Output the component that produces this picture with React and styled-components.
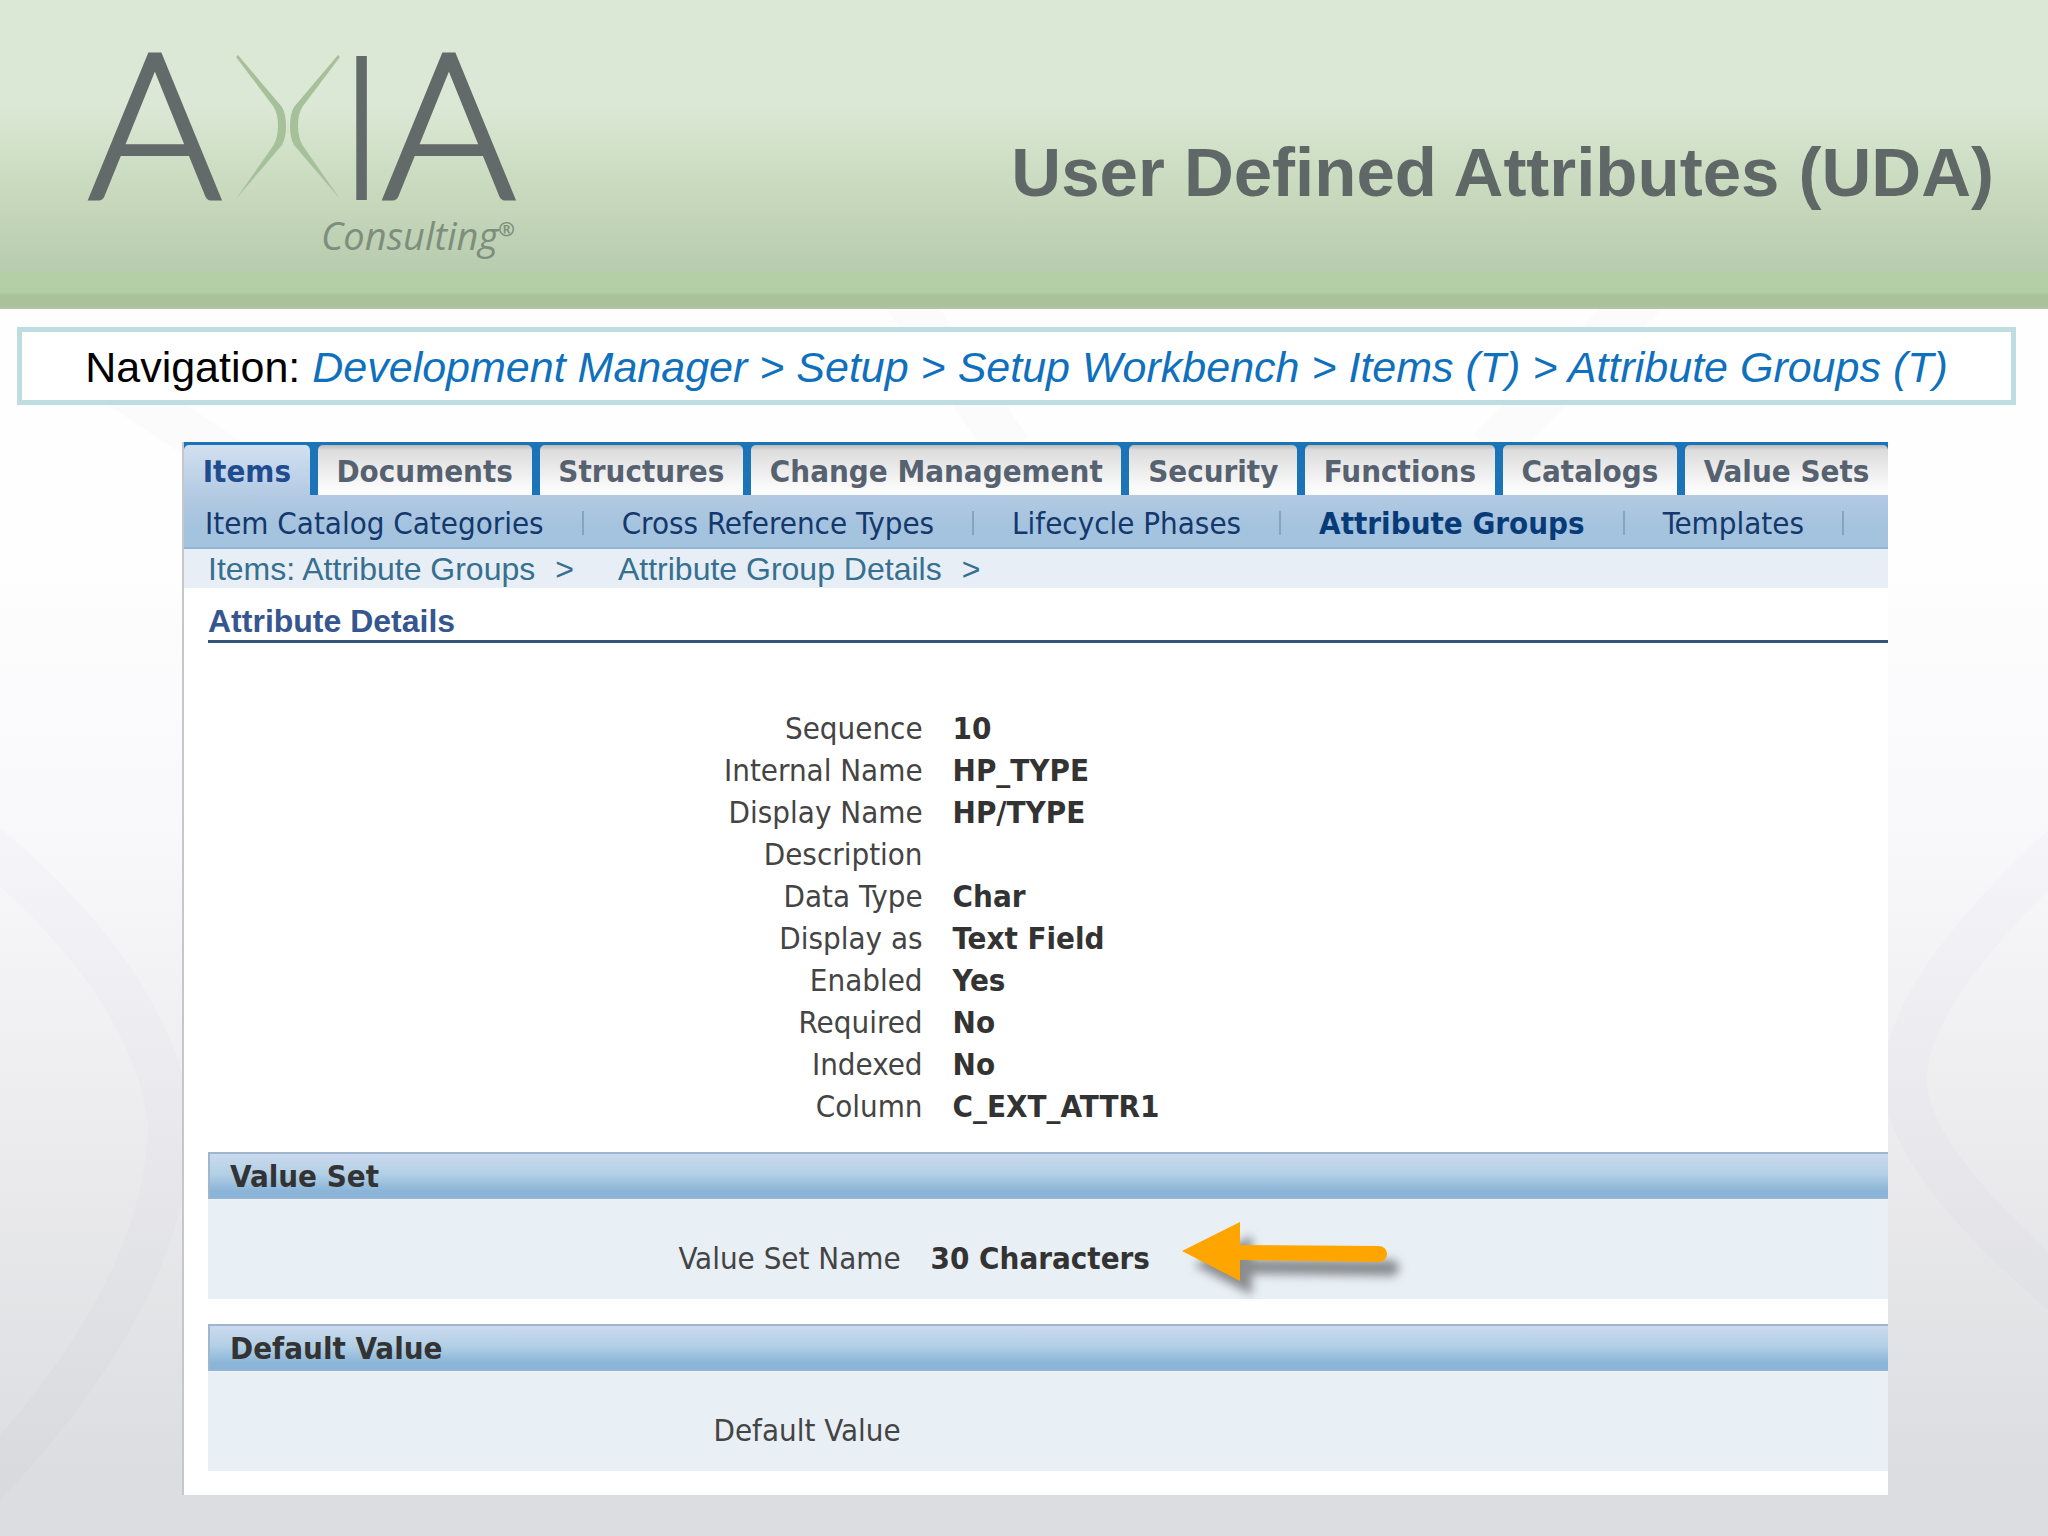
import React from 'react';
import styled, { createGlobalStyle } from 'styled-components';

const tabs = ['Items', 'Documents', 'Structures', 'Change Management', 'Security', 'Functions', 'Catalogs', 'Value Sets'];
const subTabs = ['Item Catalog Categories', 'Cross Reference Types', 'Lifecycle Phases', 'Attribute Groups', 'Templates'];
const details = [
    ['Sequence', '10'],
    ['Internal Name', 'HP_TYPE'],
    ['Display Name', 'HP/TYPE'],
    ['Description', ''],
    ['Data Type', 'Char'],
    ['Display as', 'Text Field'],
    ['Enabled', 'Yes'],
    ['Required', 'No'],
    ['Indexed', 'No'],
    ['Column', 'C_EXT_ATTR1'],
];

const GlobalStyle = createGlobalStyle`
    * {
        box-sizing: border-box;
    }
    body {
        margin: 0;
        background-color: #dcdde0;
        font-family: "Liberation Sans", Arial, sans-serif;
    }
`;

function Logo() {
    return (
        <LogoStyle viewBox="0 0 450 309" role="img" aria-label="AXIA Consulting">
            <LogoLetter x="2" y="199" strokeWidth="4">A</LogoLetter>
            <path d="M150 57 L187 106 Q192 113 192 126 Q192 138 187 146 L150 199 L196 145 Q200 138 200 126 Q200 114 196 107 L152 55 Z" fill="#a6c19a" />
            <path d="M254 57 L217 106 Q212 113 212 126 Q212 138 217 146 L254 199 L208 145 Q204 138 204 126 Q204 114 208 107 L252 55 Z" fill="#a6c19a" />
            <LogoLetter x="249" y="200">I</LogoLetter>
            <LogoLetter x="296" y="199" strokeWidth="4">A</LogoLetter>
            <LogoWord x="235" y="250">Consulting<tspan fontSize="20" fontWeight="700" dy="-14">®</tspan></LogoWord>
        </LogoStyle>
    );
}

// faint strokes of the logo's X behind the page
function Backdrop() {
    return (
        <BackdropStyle viewBox="0 0 2048 1536" preserveAspectRatio="none" aria-hidden="true">
            <path d="M-20 840 Q150 980 170 1120 Q170 1290 -20 1490" />
            <path d="M2070 840 Q1905 990 1905 1080 Q1905 1160 2070 1300" />
            <path d="M1650 290 L1490 450" />
            <path d="M900 290 L1010 450" />
            <path d="M110 380 L230 460" />
        </BackdropStyle>
    );
}

function Arrow() {
    return (
        <ArrowStyle viewBox="0 0 240 90" aria-hidden="true">
            <path d="M4 34 L62 5 V28 L201 29 A8 8 0 0 1 201 45 L62 43 V64 Z" />
        </ArrowStyle>
    );
}

function Section({ title, label, children }) {
    return (
        <section>
            <SectionTitle>{title}</SectionTitle>
            <SectionBody>
                <Label>{label}</Label>
                <Value>{children}</Value>
            </SectionBody>
        </section>
    );
}

function App() {
    return (
        <Slide>
            <GlobalStyle />
            <Backdrop />
            <Header>
                <Logo />
                <Title>User Defined Attributes (UDA)</Title>
            </Header>
            <NavPath>
                Navigation: <em>Development Manager &gt; Setup &gt; Setup Workbench &gt; Items (T) &gt; Attribute Groups (T)</em>
            </NavPath>
            <Panel>
                <TabBar>
                    {tabs.map((tab, index) => <Tab key={tab} href="#" $active={index === 0}>{tab}</Tab>)}
                </TabBar>
                <SubTabBar>
                    {subTabs.map((tab) => <SubTab key={tab} href="#" $active={tab === 'Attribute Groups'}>{tab}</SubTab>)}
                </SubTabBar>
                <Breadcrumb>
                    <Crumb><a href="#">Items: Attribute Groups</a><span>&gt;</span></Crumb>
                    <Crumb><a href="#">Attribute Group Details</a><span>&gt;</span></Crumb>
                </Breadcrumb>
                <Content>
                    <Heading>Attribute Details</Heading>
                    <DetailList>
                        {details.map(([name, value]) => (
                            <DetailRow key={name}>
                                <Label as="dt">{name}</Label>
                                <Value as="dd">{value}</Value>
                            </DetailRow>
                        ))}
                    </DetailList>
                    <Sections>
                        <Section title="Value Set" label="Value Set Name">30 Characters<Arrow /></Section>
                        <Section title="Default Value" label="Default Value" />
                    </Sections>
                </Content>
            </Panel>
        </Slide>
    );
}

const uiFont = '"DejaVu Sans Condensed", Tahoma, "DejaVu Sans", sans-serif';

const Slide = styled.main`
    position: relative;
    z-index: 0;
    min-height: 100vh;
    padding-bottom: 41px;
    background: linear-gradient(#fefefe 0, #fefefe 36%, #f8f7fa 55%, #ebebee 75%, #dcdde0 96%);
`;

const BackdropStyle = styled.svg`
    position: absolute;
    inset: 0;
    z-index: -1;
    width: 100%;
    height: 100%;
    fill: none;
    stroke: rgba(130, 130, 150, 0.025);
    stroke-width: 44px;
`;

const Header = styled.header`
    display: flex;
    justify-content: space-between;
    align-items: center;
    height: 309px;
    padding: 0 54px 0 86px;
    background: linear-gradient(#dce8d6 0, #dce8d6 104px, #cfdfc5 160px, #c4d5b9 215px, #b8ccb0 270px, #b3cfa5 275px, #b3cfa5 292px, #a9c29b 295px, #a9c29b 306px, #b9c2b0 309px);
`;

const LogoStyle = styled.svg`
    width: 450px;
    height: 309px;
`;

const LogoLetter = styled.text`
    font-family: Lato, sans-serif;
    font-weight: 300;
    font-size: 204px;
    fill: #626b6a;
    stroke: ${props => props.strokeWidth ? '#626b6a' : 'none'};
`;

const LogoWord = styled.text`
    font-family: "Open Sans", sans-serif;
    font-style: italic;
    font-size: 38px;
    fill: #7d8f7c;
`;

const Title = styled.h1`
    margin: 36px 0 0;
    font-size: 69px;
    line-height: 80px;
    color: #5f6866;
`;

const NavPath = styled.nav`
    margin: 18px 32px 0 17px;
    padding-top: 2px;
    border: 5px solid #bddde0;
    background-color: #fff;
    font-size: 43px;
    line-height: 66px;
    text-align: center;
    white-space: nowrap;
    color: #000;

    em {
        color: #0f70bd;
    }
`;

const Panel = styled.div`
    margin: 37px 160px 0 182px;
    border-left: 2px solid #c6c7cb;
    background-color: #fff;
    font-family: ${uiFont};
    font-size: 31px;
`;

const TabBar = styled.div`
    display: flex;
    gap: 8px;
    padding-top: 3px;
    background-color: #1c74b8;
`;

const Tab = styled.a`
    flex: 1 1 auto;
    padding-top: 2px;
    border-radius: 5px 5px 0 0;
    background: ${props => props.$active ? 'linear-gradient(#d2dff0, #b4cbe3)' : 'linear-gradient(#b9b9ba, #dcdcdd 5px, #fcfcfc 90%)'};
    color: ${props => props.$active ? '#1f4b8f' : '#566270'};
    font-weight: bold;
    line-height: 48px;
    text-align: center;
    text-decoration: none;
    white-space: nowrap;
`;

const SubTabBar = styled.div`
    display: flex;
    align-items: center;
    height: 54px;
    padding: 3px 0 0 21px;
    border-bottom: 2px solid #93b5d5;
    background: linear-gradient(#b4c9e2, #a4c3df 60%);
`;

const SubTab = styled.a`
    display: flex;
    align-items: center;
    color: ${props => props.$active ? '#063b78' : '#14386c'};
    font-weight: ${props => props.$active ? 'bold' : 'normal'};
    text-decoration: none;
    white-space: nowrap;

    &::after {
        content: '';
        width: 2px;
        height: 24px;
        margin: 0 38px;
        background-color: #86a3c0;
    }
`;

const Breadcrumb = styled.div`
    display: flex;
    gap: 44px;
    padding: 2px 0 0 24px;
    background-color: #e8eef6;
    font-family: "Liberation Sans", Arial, sans-serif;
    font-size: 32px;
    line-height: 37px;
    color: #36708f;
`;

const Crumb = styled.span`
    display: flex;
    gap: 20px;

    a {
        color: inherit;
        text-decoration: none;
    }
`;

const Content = styled.div`
    padding: 14px 0 24px 24px;
`;

const Heading = styled.h2`
    margin: 0;
    border-bottom: 3px solid #34547c;
    font-family: "Liberation Sans", Arial, sans-serif;
    font-size: 32px;
    line-height: 38px;
    color: #35568f;
`;

const DetailList = styled.dl`
    margin: 64px 0 25px;
`;

const DetailRow = styled.div`
    display: grid;
    grid-template-columns: 715fr 936fr;
    gap: 30px;
    line-height: 42px;
`;

const Label = styled.span`
    text-align: right;
    color: #444;
`;

const Value = styled.span`
    display: flex;
    align-items: center;
    margin: 0;
    font-weight: bold;
    color: #333;
`;

const Sections = styled.div`
    display: flex;
    flex-direction: column;
    gap: 25px;
`;

const SectionTitle = styled.h3`
    margin: 0;
    padding-left: 20px;
    border: solid #9fb6cf;
    border-width: 2px 0 1px 2px;
    background: linear-gradient(#cbd9ee, #b3d0e6 45%, #8ab4d8 85%);
    font-size: 31px;
    line-height: 44px;
    color: #333;
`;

const SectionBody = styled.div`
    display: grid;
    grid-template-columns: 693fr 958fr;
    gap: 30px;
    padding: 38px 0 20px;
    background-color: #e8eff5;
    line-height: 42px;
`;

const ArrowStyle = styled.svg`
    width: 240px;
    height: 90px;
    margin: -20px 0 -28px 28px;
    fill: #ffa500;
    filter: drop-shadow(12px 14px 5px rgba(60, 60, 60, 0.55));
`;

export default App;
